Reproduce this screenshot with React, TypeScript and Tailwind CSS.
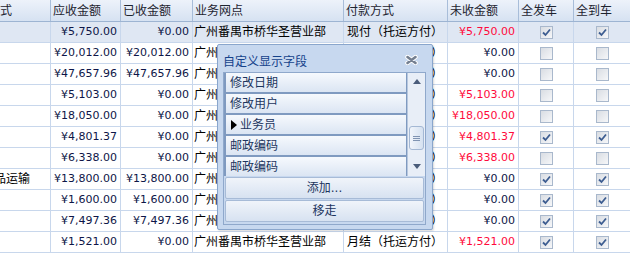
import React from 'react';

const cjk = "'DejaVu Sans','Noto Sans CJK SC',sans-serif";

type Row = { c1: string; a: string; b: string; pay: string; u: string; red: boolean; f: boolean; t: boolean };

const rows: Row[] = [
  { c1: '', a: '¥5,750.00', b: '¥0.00', pay: '现付（托运方付）', u: '¥5,750.00', red: true, f: true, t: true },
  { c1: '', a: '¥20,012.00', b: '¥20,012.00', pay: '现付（托运方付）', u: '¥0.00', red: false, f: false, t: false },
  { c1: '', a: '¥47,657.96', b: '¥47,657.96', pay: '现付（托运方付）', u: '¥0.00', red: false, f: false, t: false },
  { c1: '', a: '¥5,103.00', b: '¥0.00', pay: '月结（托运方付）', u: '¥5,103.00', red: true, f: false, t: false },
  { c1: '', a: '¥18,050.00', b: '¥0.00', pay: '月结（托运方付）', u: '¥18,050.00', red: true, f: false, t: false },
  { c1: '', a: '¥4,801.37', b: '¥0.00', pay: '月结（托运方付）', u: '¥4,801.37', red: true, f: true, t: true },
  { c1: '', a: '¥6,338.00', b: '¥0.00', pay: '月结（托运方付）', u: '¥6,338.00', red: true, f: false, t: false },
  { c1: '品运输', a: '¥13,800.00', b: '¥13,800.00', pay: '现付（托运方付）', u: '¥0.00', red: false, f: true, t: true },
  { c1: '', a: '¥1,600.00', b: '¥1,600.00', pay: '现付（托运方付）', u: '¥0.00', red: false, f: true, t: true },
  { c1: '', a: '¥7,497.36', b: '¥7,497.36', pay: '现付（托运方付）', u: '¥0.00', red: false, f: true, t: true },
  { c1: '', a: '¥1,521.00', b: '¥0.00', pay: '月结（托运方付）', u: '¥1,521.00', red: true, f: true, t: true },
];

const widths = ['w-[51px]', 'w-[70px]', 'w-[72px]', 'w-[151px]', 'w-[104px]', 'w-[71px]', 'w-[55px]', 'w-[57px]'];
const heads = ['式', '应收金额', '已收金额', '业务网点', '付款方式', '未收金额', '全发车', '全到车'];

function Check({ on }: { on: boolean }) {
  return (
    <div className="w-[13px] h-[13px] border border-[#a9b8cc] bg-gradient-to-br from-[#d9dde3] to-[#f6f7f9] flex items-center justify-center">
      {on && (
        <svg width="9" height="9" viewBox="0 0 9 9">
          <path d="M1 4.5 L3.5 7 L8 1.5" fill="none" stroke="#3d5d91" strokeWidth="1.8" />
        </svg>
      )}
    </div>
  );
}

function Num({ v, red }: { v: string; red?: boolean }) {
  return (
    <span className={`text-[11px] ${red ? 'text-[#ff0a3c]' : 'text-[#0e1648]'}`} style={{ fontFamily: "'DejaVu Sans',sans-serif" }}>
      {v}
    </span>
  );
}

function Panel() {
  const items = ['修改日期', '修改用户', '业务员', '邮政编码', '邮政编码'];
  return (
    <div className="absolute left-[217px] top-[44px] w-[216px] h-[186px] border border-[#8aa6cc] bg-[#c7d8ef] rounded-[2px] shadow-[1px_1px_2px_rgba(0,0,0,0.15)]">
      <div className="h-[27px] flex items-end justify-between pl-[5px] pr-[14px] pb-[4px]">
        <span className="text-[12px] text-[#15428b] leading-none">自定义显示字段</span>
        <svg width="13" height="10" viewBox="0 0 13 10" className="mb-[3px]">
          <path d="M2.5 2 L10.5 8 M10.5 2 L2.5 8" stroke="#ffffff" strokeWidth="4.5" strokeLinecap="round" />
          <path d="M2.5 2 L10.5 8 M10.5 2 L2.5 8" stroke="#747f90" strokeWidth="2.6" strokeLinecap="round" />
        </svg>
      </div>
      <div className="ml-[5px] w-[203px] h-[153px] border border-[#8fa8cb] bg-[#c7d8ef] flex flex-col">
        <div className="h-[103px] flex bg-[#7f9ac0] overflow-hidden">
          <div className="flex-1 flex flex-col gap-[2px] pl-[2px] pr-[1px]">
            {items.map((t, i) => (
              <div key={i} className="h-[19px] shrink-0 bg-gradient-to-b from-[#f6f9fd] to-[#dbe5f3] flex items-center pl-[4px] text-[12px] text-[#1c355e]">
                {i === 2 && (
                  <svg width="7" height="10" viewBox="0 0 7 10" className="mr-[2px] ml-[1px]">
                    <path d="M0 0 L6 5 L0 10 Z" fill="#000000" />
                  </svg>
                )}
                {t}
              </div>
            ))}
          </div>
          <div className="w-[18px] bg-[#e8eef7] border-l border-[#b7c7de] flex flex-col items-center relative">
            <svg width="8" height="5" viewBox="0 0 8 5" className="mt-[6px]">
              <path d="M0 5 L4 0 L8 5 Z" fill="#4a5c7a" />
            </svg>
            <div className="absolute top-[53px] left-[1px] w-[15px] h-[24px] rounded-[3px] border border-[#a4b8d4] bg-gradient-to-r from-[#f1f5fb] to-[#d5e1f0] flex flex-col items-center justify-center gap-[1px]">
              <div className="w-[7px] h-px bg-[#8094b2]" />
              <div className="w-[7px] h-px bg-[#8094b2]" />
              <div className="w-[7px] h-px bg-[#8094b2]" />
            </div>
            <svg width="8" height="5" viewBox="0 0 8 5" className="absolute bottom-[7px]">
              <path d="M0 0 L4 5 L8 0 Z" fill="#4a5c7a" />
            </svg>
          </div>
        </div>
        <div className="h-[22px] mx-[1px] mt-[1px] rounded-[2px] border border-[#a7bbd7] bg-gradient-to-b from-[#f0f4fa] to-[#d7e2f1] flex items-center justify-center text-[12px] text-[#1c355e]">
          添加...
        </div>
        <div className="h-[22px] mx-[1px] mt-[1px] rounded-[2px] border border-[#a7bbd7] bg-gradient-to-b from-[#f0f4fa] to-[#d7e2f1] flex items-center justify-center text-[12px] text-[#1c355e]">
          移走
        </div>
      </div>
    </div>
  );
}

export default function App() {
  return (
    <div className="relative w-[630px] h-[253px] overflow-hidden bg-white" style={{ fontFamily: cjk }}>
      {/* Header */}
      <div className="flex h-[22px] border-b border-[#9db4d2] bg-gradient-to-b from-[#edf2fa] to-[#d6e2f2]">
        {heads.map((h, i) => (
          <div key={i} className={`${widths[i]} shrink-0 border-r border-[#a8bdd9] flex items-center ${i === 0 ? 'pl-0' : 'pl-[2px]'} text-[12px] text-[#1e2430] whitespace-nowrap overflow-hidden`}>
            {h}
          </div>
        ))}
      </div>
      {/* Body */}
      {rows.map((r, i) => (
        <div key={i} className={`flex h-[21px] border-b border-[#c8d7ec] ${i === 0 ? 'bg-[#dfe7f3]' : 'bg-white'}`}>
          <div className={`${widths[0]} shrink-0 border-r border-[#c8d7ec] flex items-center overflow-hidden whitespace-nowrap text-[12px] text-black`}>
            <span className="-ml-[6px]">{r.c1}</span>
          </div>
          <div className={`${widths[1]} shrink-0 border-r border-[#c8d7ec] flex items-center justify-end pr-[3px]`}>
            <Num v={r.a} />
          </div>
          <div className={`${widths[2]} shrink-0 border-r border-[#c8d7ec] flex items-center justify-end pr-[3px]`}>
            <Num v={r.b} />
          </div>
          <div className={`${widths[3]} shrink-0 border-r border-[#c8d7ec] flex items-center pl-[1px] text-[12px] text-black whitespace-nowrap overflow-hidden`}>
            广州番禺市桥华圣营业部
          </div>
          <div className={`${widths[4]} shrink-0 border-r border-[#c8d7ec] flex items-center pl-[3px] text-[12px] text-black whitespace-nowrap overflow-hidden`}>
            {r.pay}
          </div>
          <div className={`${widths[5]} shrink-0 border-r border-[#c8d7ec] flex items-center justify-end pr-[3px]`}>
            <Num v={r.u} red={r.red} />
          </div>
          <div className={`${widths[6]} shrink-0 border-r border-[#c8d7ec] flex items-center justify-center`}>
            <Check on={r.f} />
          </div>
          <div className={`${widths[7]} shrink-0 flex items-center justify-center`}>
            <Check on={r.t} />
          </div>
        </div>
      ))}
      <Panel />
    </div>
  );
}
